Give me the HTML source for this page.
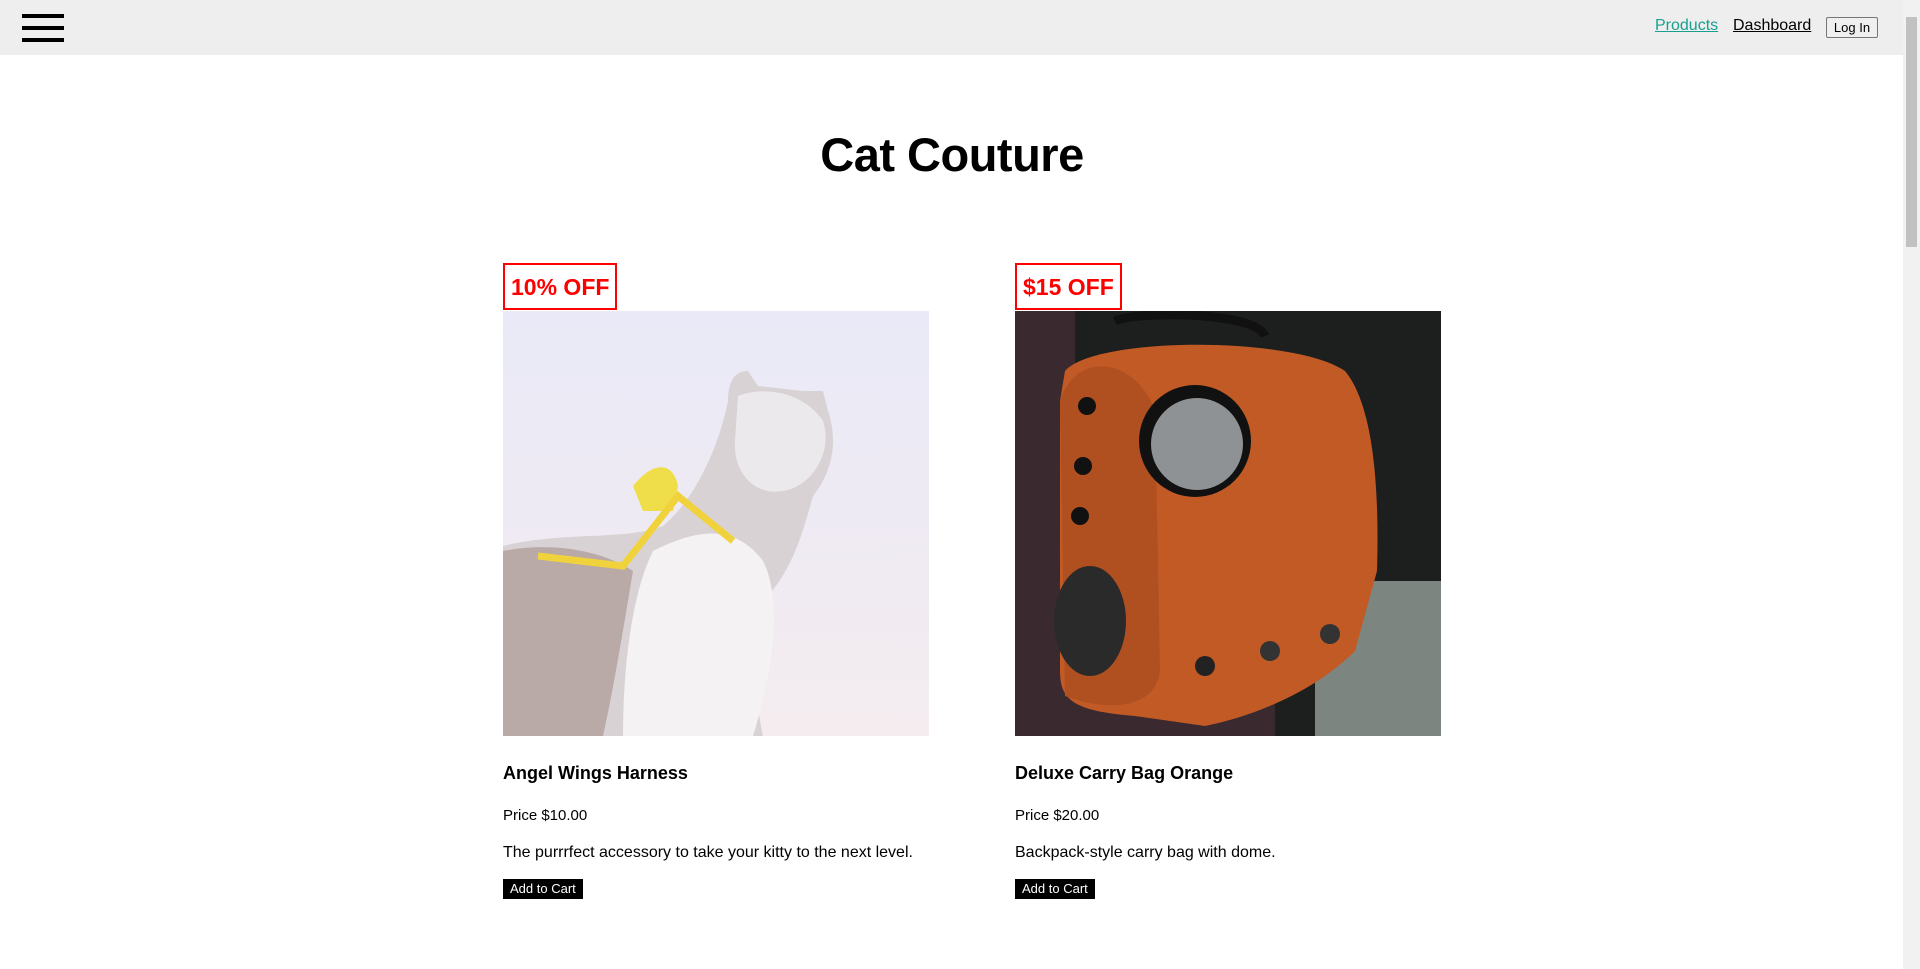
<!DOCTYPE html>
<html><head><meta charset="utf-8"><style>
html,body{margin:0;padding:0;}
body{width:1920px;height:969px;overflow:hidden;font-family:"Segoe UI","Liberation Sans",sans-serif;background:#fff;position:relative;}
.hdr{position:absolute;left:0;top:0;width:1904px;height:55px;background:#eeeeee;}
.bar{position:absolute;left:22px;width:42px;height:4px;background:#000;}
.nav{position:absolute;top:17px;font-size:16px;}
.sb{position:absolute;right:0;top:0;width:17px;height:969px;background:#f1f1f1;}
.thumb{position:absolute;right:3px;top:17px;width:11px;height:230px;background:#c1c1c1;}
h1{position:absolute;left:0;width:1904px;top:125px;margin:0;text-align:center;font-size:47px;font-weight:bold;line-height:60px;letter-spacing:-0.5px;}
.card{position:absolute;top:263px;width:426px;}
.badge{display:inline-block;border:2px solid red;color:red;font-weight:bold;font-size:23px;padding:6px 6px 5px;line-height:32px;height:32px;box-sizing:content-box;}
.img{width:426px;height:425px;display:block;margin-top:1px;}
.t{position:absolute;top:500px;font-weight:bold;font-size:18px;margin:0;}
.p{position:absolute;top:544px;font-size:15px;margin:0;}
.d{position:absolute;top:581px;font-size:16px;margin:0;white-space:nowrap;}
.btn{position:absolute;top:616px;left:0;background:#000;color:#fff;font-family:"Liberation Sans",Arial,sans-serif;font-size:13px;height:20px;line-height:20px;padding:0 7px;}
</style></head><body>
<div class="hdr">
<div class="bar" style="top:14px"></div><div class="bar" style="top:26px"></div><div class="bar" style="top:38px"></div>
<span class="nav" style="left:1655px;color:#17a090;text-decoration:underline">Products</span>
<span class="nav" style="left:1733px;color:#000;text-decoration:underline">Dashboard</span>
<span style="position:absolute;left:1826px;top:17px;width:50px;height:19px;border:1px solid #767676;border-radius:2px;font-size:13px;line-height:19px;text-align:center;background:#efefef;font-family:'Liberation Sans',sans-serif">Log In</span>
</div>
<div class="sb"><div class="thumb"></div></div>
<h1>Cat Couture</h1>

<div class="card" style="left:503px">
<div class="badge">10% OFF</div>
<svg class="img" viewBox="0 0 426 425"><defs><linearGradient id="sky" x1="0" y1="0" x2="0" y2="1"><stop offset="0" stop-color="#e9e9f7"/><stop offset="1" stop-color="#f4ecef"/></linearGradient></defs>
<rect width="426" height="425" fill="url(#sky)"/>
<path d="M0 235 C60 220 120 230 160 215 C190 190 215 140 225 90 C225 70 232 60 245 60 L255 75 L300 80 L320 80 L325 100 C335 130 330 160 310 185 C300 220 290 260 260 290 C250 330 250 380 260 425 L0 425 Z" fill="#d9d2d4"/>
<path d="M150 240 C190 220 230 210 260 250 C280 290 270 360 250 425 L120 425 C120 350 130 280 150 240Z" fill="#f4f2f3"/>
<path d="M0 240 C50 230 100 240 130 260 C120 320 110 380 100 425 L0 425Z" fill="#b9aaa8"/>
<path d="M235 85 C260 75 300 80 320 110 C330 140 310 175 280 180 C250 185 230 160 232 130Z" fill="#ece9ec"/>
<path d="M130 175 C150 150 170 150 175 175 L170 200 L140 200Z" fill="#f0dd4a"/>
<path d="M35 245 L120 255 L175 185 L230 230" stroke="#f0d23c" stroke-width="7" fill="none"/>
</svg>
<p class="t">Angel Wings Harness</p>
<p class="p">Price $10.00</p>
<p class="d">The purrrfect accessory to take your kitty to the next level.</p>
<span class="btn">Add to Cart</span>
</div>

<div class="card" style="left:1015px">
<div class="badge">$15 OFF</div>
<svg class="img" viewBox="0 0 426 425">
<rect width="426" height="425" fill="#1c1f1e"/>
<rect x="300" y="270" width="126" height="155" fill="#7d8580"/>
<rect x="0" y="0" width="60" height="425" fill="#3a2a30"/>
<rect x="60" y="380" width="200" height="45" fill="#3a2a30"/>
<path d="M50 60 C80 25 280 25 330 60 C355 90 365 160 362 260 L340 340 C300 380 240 405 190 415 L120 405 C60 400 45 390 45 360 L45 90Z" fill="#c25a26"/>
<path d="M45 90 C60 40 120 45 140 100 L145 360 C140 400 90 400 50 385Z" fill="#b04f20"/>
<path d="M100 10 C120 0 240 0 250 25" stroke="#111" stroke-width="9" fill="none"/>
<circle cx="180" cy="130" r="56" fill="#111"/>
<circle cx="182" cy="133" r="46" fill="#8f9294"/>
<ellipse cx="75" cy="310" rx="36" ry="55" fill="#2a2a2a"/>
<circle cx="72" cy="95" r="9" fill="#111"/><circle cx="68" cy="155" r="9" fill="#111"/><circle cx="65" cy="205" r="9" fill="#111"/>
<circle cx="190" cy="355" r="10" fill="#222"/><circle cx="255" cy="340" r="10" fill="#333"/><circle cx="315" cy="323" r="10" fill="#333"/>
</svg>
<p class="t">Deluxe Carry Bag Orange</p>
<p class="p">Price $20.00</p>
<p class="d">Backpack-style carry bag with dome.</p>
<span class="btn">Add to Cart</span>
</div>
</body></html>
